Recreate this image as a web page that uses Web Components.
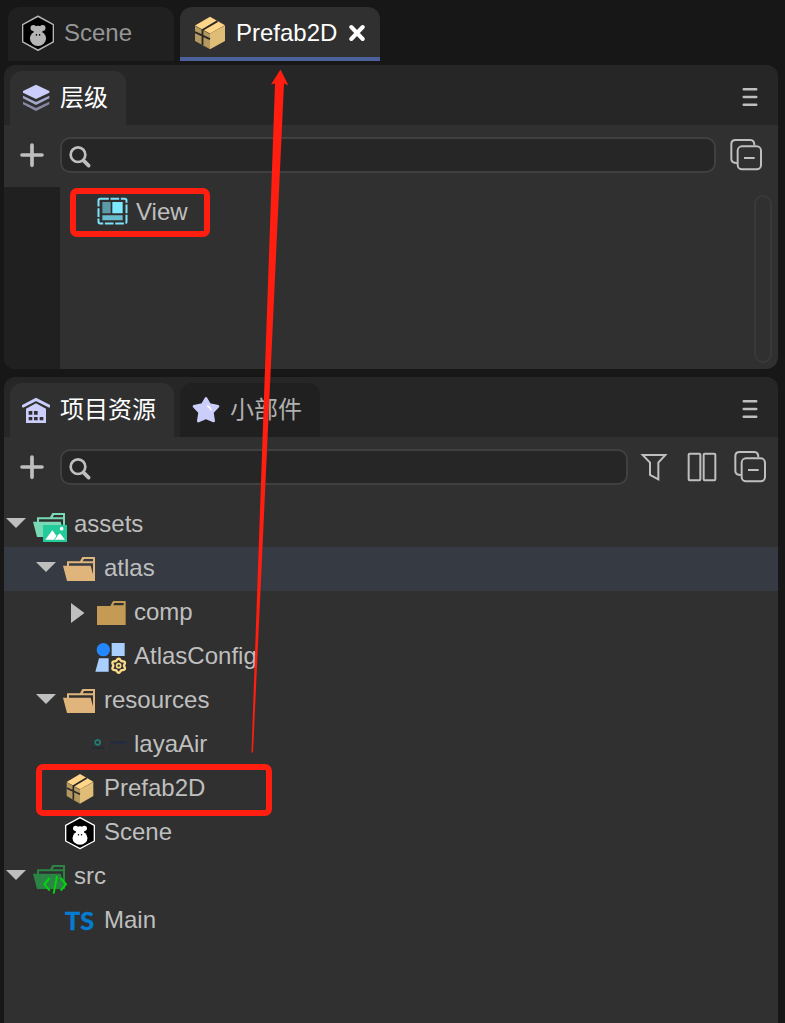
<!DOCTYPE html>
<html lang="zh-CN">
<head>
<meta charset="utf-8">
<title>Prefab2D</title>
<style>
  html, body { margin: 0; height: 100%; background: #171717; overflow: hidden; }
  body { font: 24px/28px "Liberation Sans", "Noto Sans CJK SC", sans-serif; color: #bfbfbf; }
</style>
</head>
<body>
<ide-window>
  <ide-tab slot="docs" kind="doc" icon="scene-tab">Scene</ide-tab>
  <ide-tab slot="docs" kind="doc" icon="prefab-tab" active closable>Prefab2D</ide-tab>

  <ide-panel style="height:304px">
    <ide-tab slot="tabs" icon="layers" active style="width:116px">层级</ide-tab>
    <ide-toolbar slot="tools" style="--h:62px;--end:14px">
      <ui-icon name="collapse" style="margin-left:12px"></ui-icon>
    </ide-toolbar>
    <hierarchy-view>
      <tree-row depth="1" icon="view">View</tree-row>
    </hierarchy-view>
  </ide-panel>

  <ide-panel style="height:660px">
    <ide-tab slot="tabs" icon="home" active style="width:164px">项目资源</ide-tab>
    <ide-tab slot="tabs" icon="star" style="width:140px">小部件</ide-tab>
    <ide-toolbar slot="tools" style="--h:66px;--end:10px">
      <ui-icon name="filter" style="margin-left:8px"></ui-icon>
      <ui-icon name="columns" style="margin-left:12px"></ui-icon>
      <ui-icon name="collapse" style="margin-left:12px"></ui-icon>
    </ide-toolbar>
    <tree-row depth="0" arrow="open" icon="assets">assets</tree-row>
    <tree-row depth="1" arrow="open" icon="folder-open" selected>atlas</tree-row>
    <tree-row depth="2" arrow="closed" icon="folder">comp</tree-row>
    <tree-row depth="2" icon="atlas">AtlasConfig</tree-row>
    <tree-row depth="1" arrow="open" icon="folder-open">resources</tree-row>
    <tree-row depth="2" icon="laya">layaAir</tree-row>
    <tree-row depth="1" icon="prefab">Prefab2D</tree-row>
    <tree-row depth="1" icon="scene">Scene</tree-row>
    <tree-row depth="0" arrow="open" icon="src">src</tree-row>
    <tree-row depth="1" icon="ts">Main</tree-row>
  </ide-panel>

  <callout-marks slot="marks"></callout-marks>
</ide-window>

<script>
const openFolder = c => `<path fill="${c}" fill-rule="evenodd" d="M201 184H240L247 171H285V243H201L189 197H201ZM252 177H279V184H248ZM207 190H279V223L272 197H207Z"/>`;
const box = `<path fill="#ffd588" d="M200 96L240 72L280 95L240 118Z"/>
  <path fill="#dfbd77" d="M280 96V138L240 161V118Z"/><path fill="#b3985f" d="M200 97L240 119V161L200 138Z"/>
  <path d="M220 149V108L260 84M200 114L240 133" fill="none" stroke="#2c2a26" stroke-width="5"/>`;
const ape = (edge, face) => `<path d="M240 203L283 226V273L240 296L197 273V226Z" fill="#000" stroke="${edge}" stroke-width="4" stroke-linejoin="round"/>
  <g fill="${face}"><circle cx="227" cy="235" r="8"/><circle cx="253" cy="235" r="8"/><ellipse cx="240" cy="242" rx="13" ry="13"/><ellipse cx="240" cy="264" rx="22.5" ry="20.5"/></g>
  <circle cx="235.5" cy="254" r="2.2"/><circle cx="244.5" cy="254" r="2.2"/>`;
let gear = '';
for (let i = 0; i <= 72; i++) {
  const a = i * Math.PI / 36, r = 18.5 + 2.6 * Math.cos(6 * a);
  gear += (i ? 'L' : 'M') + (176 + r * Math.sin(a)).toFixed(1) + ' ' + (227 - r * Math.cos(a)).toFixed(1);
}
/* name: [width, height, viewBox, markup] */
const ICONS = {
  'assets': [36, 44, '96 9 108 132', `<g transform="translate(-90 -132)">${openFolder('#79d9b4')}</g><path fill="#24cb9a" d="M129 75H201V126H129Z"/><path fill="#fff" d="M136 119L157 91L170 109L180 100L195 119Z"/><path d="M163 119L171 108" stroke="#24cb9a" stroke-width="3"/><circle cx="185" cy="86" r="5.5" fill="#fff"/>`],
  'folder-open': [36, 44, '186 141 108 132', openFolder('#dfb57c')],
  'folder': [36, 44, '276 273 108 132', `<path fill="#c49a55" fill-rule="evenodd" d="M291 318H331L339 303H377V375H291ZM343 309H371V316H340Z"/>`],
  'atlas': [36, 44, '96 135 108 132', `<circle cx="130" cy="179" r="20" fill="#2388ff"/><path fill="#a9cfff" d="M155 159H194V198H155ZM117 205H146V245H106Z"/><circle cx="176" cy="227" r="27" fill="#303030"/><path d="${gear}Z" fill="none" stroke="#fadb87" stroke-width="7"/><circle cx="176" cy="227" r="6" fill="none" stroke="#fadb87" stroke-width="5"/>`],
  'laya': [36, 44, '96 399 108 132', `<path d="M113 449L120 453V461L113 465L106 461V453Z" fill="none" stroke="#1d8072" stroke-width="5"/><path d="M96 474H132" stroke="#1c2638" stroke-width="4" stroke-dasharray="5 1"/><path d="M139 447V477" stroke="#3b3b3b" stroke-width="2"/><path d="M152 457H200" stroke="#202a46" stroke-width="8" stroke-dasharray="5 2"/><path d="M149 474H203" stroke="#2b2e35" stroke-width="3"/>`],
  'prefab': [36, 44, '186 51 108 132', box],
  'scene': [36, 44, '186 183 108 132', ape('#fff', '#fff')],
  'src': [36, 44, '96 15 108 132', `<g transform="translate(-90 -126)">${openFolder('#2b8443')}</g><path d="M149 84L133 103L149 122M171 78L161 131M182 84L198 103L182 122" fill="none" stroke="#04d40c" stroke-width="6"/>`],
  'ts': [36, 44, '186 147 108 132', `<text x="195" y="241" textLength="87" lengthAdjust="spacingAndGlyphs" font-family="Lato" font-weight="700" font-size="76" fill="#047cd2" stroke="#047cd2" stroke-width="1.5">TS</text>`],
  'view': [36, 44, '282 213 108 132', `<rect x="295.500" y="236.500" width="84" height="74" rx="5" fill="none" stroke="#7ce4fb" stroke-width="6" stroke-dasharray="26 5"/><path fill="#5b9aa7" d="M307 246H332V280H307Z"/><path fill="#7ce9ff" d="M337 246H368V280H337Z"/><path fill="#68bccd" d="M307 286H368V301H307Z"/>`],
  'scene-tab': [32, 38, '66 42 96 114', `<g transform="translate(-143.400 -173.700) scale(1.0725 1.096)">${ape('#b5b5b5', '#b5b5b5')}</g>`],
  'prefab-tab': [32, 38, '42 42 96 114', `<g transform="translate(-180 -29) scale(1.125 1.1)">${box}</g>`],
  'layers': [28, 32, '66 243 84 96', `<path fill="#cbcefb" d="M108 251L148 270V275L108 294L69 275V270Z"/><path fill="#a5a8cd" d="M69 284L108 303L148 284V292L108 312L69 292Z"/><path fill="#8788a6" d="M69 302L108 321L148 302V310L108 330L69 310Z"/>`],
  'home': [28, 32, '66 99 84 96', `<path d="M70 135L108 115L147 135" fill="none" stroke="#cbcefb" stroke-width="9" stroke-linecap="round"/><path fill="#cbcefb" d="M78 143L108 127L138 143V186H78Z"/><path fill="#303030" d="M86 150h11v11h-11zM102 150h11v11h-11zM86 168h11v10h-11zM102 168h11v10h-11zM119 168h11v10h-11z"/>`],
  'star': [28, 32, '576 99 84 96', `<path d="M618 113L629 132L654 137L637 155L641 181L618 171L595 181L599 155L582 137L607 132Z" fill="#cbcefb" stroke="#cbcefb" stroke-width="8" stroke-linejoin="round" transform="translate(0 -1)"/><path d="M622 134Q630 138 634 148" fill="none" stroke="#fff" stroke-width="5"/>`],
  'plus': [56, 36, '12 51 168 108', `<path d="M66 105H126M96 75V136" stroke="#bfbfbf" stroke-width="11" stroke-linecap="round"/>`],
  'search': [36, 36, '180 51 108 108', `<circle cx="234" cy="104" r="22" fill="none" stroke="#bfbfbf" stroke-width="8"/><path d="M251 122L266 137" stroke="#bfbfbf" stroke-width="11" stroke-linecap="round"/>`],
  'collapse': [36, 36, '114 231 108 108', `<path d="M141 309Q124 309 124 297V252Q124 240 137 240H181Q193 240 193 256" fill="none" stroke="#bfbfbf" stroke-width="6"/><rect x="143" y="259" width="70" height="69" rx="13" fill="none" stroke="#bfbfbf" stroke-width="6"/><path d="M162 294H194" stroke="#bfbfbf" stroke-width="6"/>`],
  'filter': [36, 36, '108 57 108 108', `<path d="M128 75H196L175 98V148L150 135V98Z" fill="none" stroke="#bfbfbf" stroke-width="6"/>`],
  'columns': [36, 36, '252 57 108 108', `<rect x="266" y="71" width="35" height="80" rx="3" fill="none" stroke="#bfbfbf" stroke-width="6"/><rect x="311" y="71" width="35" height="80" rx="3" fill="none" stroke="#bfbfbf" stroke-width="6"/>`],
  'menu': [16, 20, '0 0 16 20', `<path d="M1.800 2.200H14.200M1.800 10H14.200M1.800 17.800H14.200" stroke="#bfbfbf" stroke-width="2.600" stroke-linecap="round"/>`],
  'close': [16, 18, '0 0 16 18', `<path d="M2.300 3L13.700 15M13.700 3L2.300 15" stroke="#fff" stroke-width="4" stroke-linecap="round"/>`],
  'arrow-open': [28, 44, '0 0 28 44', `<path fill="#bfbfbf" d="M2 15H22L12 25Z"/>`],
  'arrow-closed': [28, 44, '0 0 28 44', `<path fill="#bfbfbf" d="M7 12L20.500 22L7 32Z"/>`],
};

const define = (name, html) => customElements.define(name, class extends HTMLElement {
  constructor() {
    super();
    this.attachShadow({ mode: 'open' }).innerHTML = typeof html === 'function' ? html(this) : html;
  }
});

define('ui-icon', el => {
  const [w, h, vb, body] = ICONS[el.getAttribute('name')];
  return `<style>:host{display:block;flex:none;width:${w}px;height:${h}px}svg{display:block}</style>
    <svg width="${w}" height="${h}" viewBox="${vb}">${body}</svg>`;
});

define('ide-tab', el => `<style>
  :host{display:flex;align-items:center;box-sizing:border-box;height:54px;padding:0 0 0 12px;gap:10px;
    border-radius:12px 12px 0 0;background:#202020;color:#b0b0b0;white-space:nowrap}
  :host([active]){background:#303030;color:#fff}
  :host([kind=doc]){width:166px;padding-left:14px;padding-bottom:2px}
  :host([kind=doc][active]){width:200px;border-bottom:4px solid #4d629a;padding-top:2px;padding-bottom:0}
  :host([kind=doc]:not([active])){color:#969696}
  .close{margin-left:2px}
  </style><ui-icon name="${el.getAttribute('icon')}"></ui-icon><span><slot></slot></span>
  ${el.hasAttribute('closable') ? '<ui-icon class="close" name="close"></ui-icon>' : ''}`);

define('ide-panel', `<style>
  :host{display:flex;flex-direction:column;flex:none;border-radius:12px;overflow:hidden;background:#303030}
  header{display:flex;align-items:flex-end;gap:6px;height:60px;padding:0 20px 0 6px;background:#262626}
  .menu{margin:0 0 18px auto}
  </style><header><slot name="tabs"></slot><ui-icon class="menu" name="menu"></ui-icon></header>
  <slot name="tools"></slot><slot></slot>`);

define('ide-toolbar', `<style>
  :host{display:flex;align-items:flex-start;box-sizing:border-box;flex:none;height:var(--h);padding:12px var(--end) 0 0}
  .field{flex:1;box-sizing:border-box;height:36px;border:2px solid #404040;border-radius:10px;background:#262626}
  .field ui-icon{margin:-2px}
  </style><ui-icon name="plus"></ui-icon><div class="field"><ui-icon name="search"></ui-icon></div><slot></slot>`);

define('hierarchy-view', `<style>
  :host{display:flex;flex:1}
  .gutter{width:56px;background:#202020}
  .rows{flex:1;padding-top:4px;margin-left:-24px}
  .bar{box-sizing:border-box;width:18px;margin:8px 6px 6px 0;border:2px solid #393939;border-radius:9px}
  </style><div class="gutter"></div><div class="rows"><slot></slot></div><div class="bar"></div>`);

define('tree-row', el => {
  const a = el.getAttribute('arrow');
  return `<style>
  :host{display:flex;align-items:center;flex:none;height:44px;white-space:nowrap}
  :host([selected]){background:#363a43}
  .indent{width:${el.getAttribute('depth') * 30 + (a ? 0 : 28)}px}
  .label{margin-left:6px;padding-bottom:2px}
  </style><span class="indent"></span>${a ? `<ui-icon name="arrow-${a}"></ui-icon>` : ''}
  <ui-icon name="${el.getAttribute('icon')}"></ui-icon><span class="label"><slot></slot></span>`;
});

define('callout-marks', `<style>
  :host{position:absolute;inset:0;pointer-events:none}
  i{position:absolute;box-sizing:border-box;border:6px solid #ff1e10;border-radius:7px}
  svg{position:absolute;left:0;top:0}
  </style><i style="left:70px;top:188px;width:140px;height:49px"></i>
  <i style="left:36px;top:763.5px;width:236px;height:52px"></i>
  <svg width="785" height="1023"><path fill="#ff1e10" d="M280.5 69.5L288.5 85.5L284 83.5L253 752.5H251.500L275 83.5L271 84.5Z"/></svg>`);

define('ide-window', `<style>
  :host{display:flex;flex-direction:column;gap:8px;position:relative;box-sizing:border-box;width:785px;height:1023px;padding:7px 7px 0 4px;overflow:hidden}
  nav{display:flex;gap:6px;padding-left:4px;height:54px;margin-bottom:-4px}
  </style><nav><slot name="docs"></slot></nav><slot></slot><slot name="marks"></slot>`);
</script>
</body>
</html>
